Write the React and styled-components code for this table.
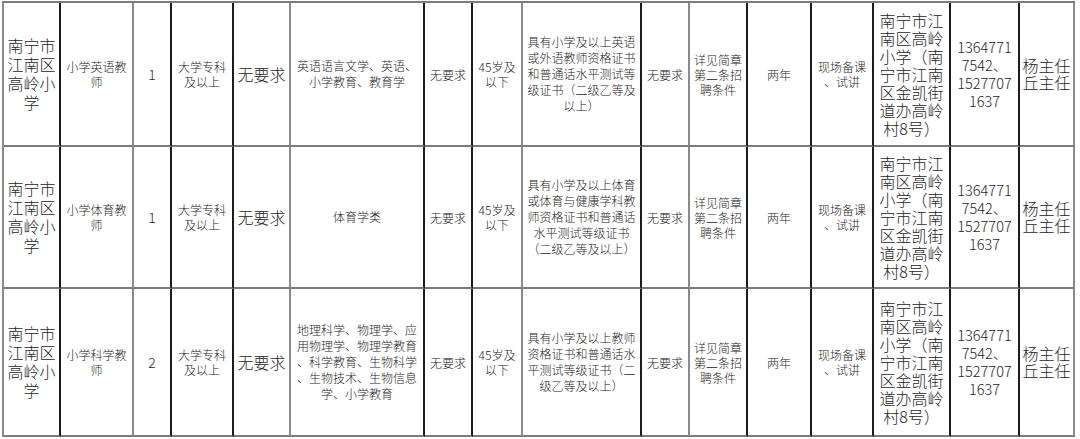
import React from "react";
import styled, { createGlobalStyle } from "styled-components";

const Global = createGlobalStyle`
  html, body { margin: 0; padding: 0; background: #ffffff; }
  body { font-family: "Noto Sans CJK SC", "DejaVu Sans", sans-serif; color: #262626; }
`;

const DARK = "#1c1c1c";
const GRAY = "#8a8a8a";

const columns = [
  { w: 57, line: DARK },
  { w: 73, line: GRAY },
  { w: 38, line: DARK },
  { w: 62, line: DARK },
  { w: 57, line: GRAY },
  { w: 134, line: DARK },
  { w: 48, line: DARK },
  { w: 50, line: GRAY },
  { w: 119, line: DARK },
  { w: 48, line: GRAY },
  { w: 58, line: DARK },
  { w: 64, line: DARK },
  { w: 62, line: DARK },
  { w: 77, line: DARK },
  { w: 69, line: DARK },
  { w: 55, line: GRAY },
];

const Page = styled.div`
  width: 1080px;
  height: 439px;
  overflow: hidden;
  padding: 1px 0 0 2px;
  box-sizing: border-box;
  background: #fff;
`;

const Sheet = styled.div`
  display: grid;
  grid-template-columns: ${columns.map((c) => `${c.w}px`).join(" ")};
  grid-template-rows: 144px 142px 148px;
  border-top: 2px solid #7c7c7c;
  border-left: 2px solid ${GRAY};
  width: max-content;
`;

const Cell = styled.div`
  box-sizing: border-box;
  border-right: 2px solid ${(p) => p.$line};
  border-bottom: 2px solid #7c7c7c;
  display: flex;
  align-items: center;
  justify-content: center;
  text-align: center;
  white-space: pre;
  font-weight: 300;
  font-size: ${(p) => p.$size}px;
  line-height: ${(p) => p.$lh}px;
  overflow: hidden;
`;

const styles = {
  big: { size: 16, lh: 19 },
  mid: { size: 16, lh: 18 },
  num: { size: 14, lh: 16 },
  small: { size: 12, lh: 15 },
  block: { size: 12, lh: 16 },
  phone: { size: 14.5, lh: 18 },
  name: { size: 16, lh: 17 },
};

const kinds = [
  "big", "small", "num", "small", "mid", "block", "small", "small",
  "block", "small", "small", "small", "small", "mid", "phone", "name",
];

const school = "南宁市\n江南区\n高岭小\n学";
const address = "南宁市江\n南区高岭\n小学（南\n宁市江南\n区金凯街\n道办高岭\n村8号）";
const phone = "1364771\n7542、\n1527707\n1637";
const contacts = "杨主任\n丘主任";

const rows = [
  [
    school,
    "小学英语教\n师",
    "1",
    "大学专科\n及以上",
    "无要求",
    "英语语言文学、英语、\n小学教育、教育学",
    "无要求",
    "45岁及\n以下",
    "具有小学及以上英语\n或外语教师资格证书\n和普通话水平测试等\n级证书（二级乙等及\n以上）",
    "无要求",
    "详见简章\n第二条招\n聘条件",
    "两年",
    "现场备课\n、试讲",
    address,
    phone,
    contacts,
  ],
  [
    school,
    "小学体育教\n师",
    "1",
    "大学专科\n及以上",
    "无要求",
    "体育学类",
    "无要求",
    "45岁及\n以下",
    "具有小学及以上体育\n或体育与健康学科教\n师资格证书和普通话\n水平测试等级证书\n（二级乙等及以上）",
    "无要求",
    "详见简章\n第二条招\n聘条件",
    "两年",
    "现场备课\n、试讲",
    address,
    phone,
    contacts,
  ],
  [
    school,
    "小学科学教\n师",
    "2",
    "大学专科\n及以上",
    "无要求",
    "地理科学、物理学、应\n用物理学、物理学教育\n、科学教育、生物科学\n、生物技术、生物信息\n学、小学教育",
    "无要求",
    "45岁及\n以下",
    "具有小学及以上教师\n资格证书和普通话水\n平测试等级证书（二\n级乙等及以上）",
    "无要求",
    "详见简章\n第二条招\n聘条件",
    "两年",
    "现场备课\n、试讲",
    address,
    phone,
    contacts,
  ],
];

export default function App() {
  return (
    <Page>
      <Global />
      <Sheet>
        {rows.map((row, r) =>
          row.map((text, c) => {
            const k = styles[kinds[c]];
            return (
              <Cell
                key={`${r}-${c}`}
                $line={columns[c].line}
                $size={k.size}
                $lh={k.lh}
              >
                {text}
              </Cell>
            );
          })
        )}
      </Sheet>
    </Page>
  );
}
